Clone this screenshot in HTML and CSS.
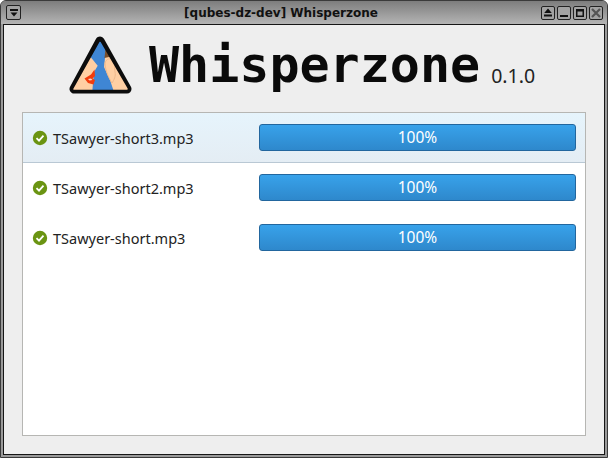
FILE: index.html
```html
<!DOCTYPE html>
<html lang="en">
<head>
<meta charset="utf-8">
<title>Whisperzone</title>
<link rel="stylesheet" href="styles.css">
</head>
<body>
<div class="frame">
  <div class="titlebar">
    <button class="wbtn menu-btn"><svg width="12" height="12" viewBox="0 0 12 12"><path d="M2 2h8v2H2zM2.500 5.500h7L6 9.500z" fill="#111"/></svg></button>
    <div class="wtitle">[qubes-dz-dev] Whisperzone</div>
    <div class="wbtns">
      <button class="wbtn"><svg width="12" height="12" viewBox="0 0 12 12"><path d="M6 1.500l3.800 4.500H2.200zM2 7.500h8v2H2z" fill="#111"/></svg></button>
      <button class="wbtn"><svg width="12" height="12" viewBox="0 0 12 12"><path d="M2 8h8v2H2z" fill="#111"/></svg></button>
      <button class="wbtn"><svg width="12" height="12" viewBox="0 0 12 12"><path d="M2 2h8v8H2zM3.500 4.500v4h5v-4z" fill="#111" fill-rule="evenodd"/></svg></button>
      <button class="wbtn"><svg width="12" height="12" viewBox="0 0 12 12"><path d="M2 2l8 8M10 2l-8 8" stroke="#555" stroke-width="2.200"/></svg></button>
    </div>
  </div>
  <div class="content">
    <header class="brand">
      <svg class="logo" width="66" height="60" viewBox="0 0 66 60">
        <defs>
          <mask id="tri"><path d="M32 7.500L6 54H59z" fill="#fff" stroke="#fff" stroke-width="1.500" stroke-linejoin="round"/></mask>
        </defs>
        <path d="M32 6L6 54H59z" fill="#0c0c0c" stroke="#0c0c0c" stroke-width="9" stroke-linejoin="round"/>
        <g mask="url(#tri)">
          <rect width="66" height="60" fill="#ffcfa3"/>
          <path d="M21 20L29.700 30.700 26 37 25 48 24 60H47L42 45 36 32 37 23 39 9 32 0z" fill="#3f86d4"/>
          <path d="M38 9L36.500 23 41 22 48 24 50 30 60 10z" fill="#7a4f2c"/>
          <path d="M37 28c1-4 6-6 9-3 2 3 0 8 1 12 1 4-1 8-3 11-2-3-7-12-7-20z" fill="#ffcfa3" stroke="#f0b98c" stroke-width="1"/>
          <path d="M26.500 34.500L23 39.500 16.500 43.500 20 48 25.500 49.500 27 45 24.500 43.500 27 41z" fill="#f23c0d"/>
          <path d="M20 44l3-.5 1.500 1.500-3 .5z" fill="#f6d8cc"/>
        </g>
      </svg>
      <h1 class="app-name">Whisperzone</h1>
      <span class="version">0.1.0</span>
    </header>
    <section class="list">
      <div class="row row-selected">
        <span class="name"><svg class="check" width="16" height="16" viewBox="0 0 16 16"><circle cx="8" cy="8" r="7.200" fill="#6a9412"/><path d="M4.500 8.200l2.500 2.500 4.500-5" fill="none" stroke="#fff" stroke-width="1.800"/></svg>TSawyer-short3.mp3</span>
        <div class="bar">100%</div>
      </div>
      <div class="row">
        <span class="name"><svg class="check" width="16" height="16" viewBox="0 0 16 16"><circle cx="8" cy="8" r="7.200" fill="#6a9412"/><path d="M4.500 8.200l2.500 2.500 4.500-5" fill="none" stroke="#fff" stroke-width="1.800"/></svg>TSawyer-short2.mp3</span>
        <div class="bar">100%</div>
      </div>
      <div class="row">
        <span class="name"><svg class="check" width="16" height="16" viewBox="0 0 16 16"><circle cx="8" cy="8" r="7.200" fill="#6a9412"/><path d="M4.500 8.200l2.500 2.500 4.500-5" fill="none" stroke="#fff" stroke-width="1.800"/></svg>TSawyer-short.mp3</span>
        <div class="bar">100%</div>
      </div>
    </section>
  </div>
</div>
</body>
</html>
```
FILE: styles.css
```css
* { box-sizing: border-box; }
html, body { margin: 0; height: 100%; }
body { width: 608px; height: 458px; overflow: hidden; background: #fff; }
.frame {
  width: 608px; height: 458px;
  display: flex; flex-direction: column;
  background: #9a9a9a;
  border: 1px solid #3a3a3a;
  border-radius: 6px 6px 0 0;
  padding: 0 2px 2px;
}
.titlebar {
  height: 23px; flex: none;
  display: flex; align-items: center;
  background: linear-gradient(#7d7d7d, #b4b4b4);
  margin: 0 -2px;
  padding: 0 4px 0 5px;
  border-radius: 5px 5px 0 0;
}
.wbtn {
  width: 14px; height: 14px; padding: 0;
  display: flex; align-items: center; justify-content: center;
  background: #a3a3a3;
  border: 1px solid #222;
  border-radius: 2px;
}
.menu-btn { width: 15px; height: 15px; }
.wtitle {
  flex: 1; text-align: center;
  font: bold 12px "DejaVu Sans", sans-serif;
  color: #111;
}
.wbtns { display: flex; gap: 2px; }
.content {
  flex: 1; min-height: 0;
  display: flex; flex-direction: column;
  background: #eeeeee;
  border: 1px solid #151515;
  padding: 0 18px 18px;
}
.brand {
  height: 87px; flex: none;
  display: flex; align-items: flex-start;
  padding: 10px 0 0 46px;
}
.logo { flex: none; margin-right: 15px; }
.app-name {
  margin: 5px 0 0;
  font: bold 50px "DejaVu Sans Mono", monospace;
  color: #0a0a0a;
  line-height: 1;
}
.version {
  font: 19.500px "Noto Sans", sans-serif;
  color: #222;
  margin: 27px 0 0 11px;
}
.list {
  flex: 1; min-height: 0;
  background: #fff;
  border: 1px solid #b6b6b3;
}
.row {
  height: 50px;
  display: flex; align-items: center;
  padding: 0 9px 1px 9px;
}
.row-selected {
  background: linear-gradient(#e6f4fc, #e4edf4);
  border-bottom: 1px solid #b9c8d4;
  padding-bottom: 0;
}
.name {
  width: 227px; flex: none;
  display: flex; align-items: center; gap: 5px;
  padding-top: 1px;
  font: 14.500px "Noto Sans", sans-serif;
  color: #222;
}
.check { flex: none; }
.bar {
  flex: 1; height: 27px;
  display: flex; align-items: center; justify-content: center;
  padding-bottom: 2px;
  background: linear-gradient(#38a2ea, #2e88cc);
  border: 1px solid #22669e;
  border-radius: 3px;
  font: 15.500px "Noto Sans", sans-serif;
  color: #fff;
}
```
